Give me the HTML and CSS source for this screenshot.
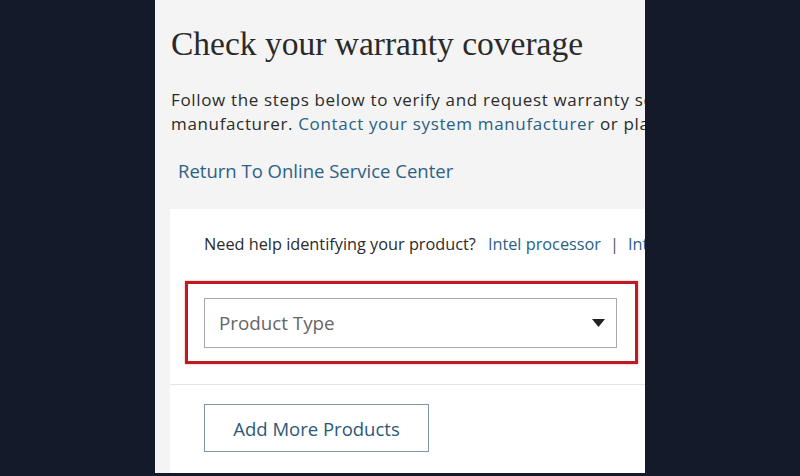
FILE: index.html
```html
<!DOCTYPE html>
<html>
<head>
<meta charset="utf-8">
<link rel="stylesheet" href="styles.css">
</head>
<body>
<div class="panel">
  <div class="inner">
    <h1 class="title">Check your warranty coverage</h1>
    <p class="intro">Follow the steps below to verify and request warranty service for Intel products purchased from an authorized distributor or system<br>manufacturer. <a class="link" href="#">Contact your system manufacturer</a> or place your request for other products.</p>
    <a class="return" href="#">Return To Online Service Center</a>
    <div class="card">
      <div class="card-top">
        <div class="help">
          <span class="help-q">Need help identifying your product?</span>
          <a class="link" href="#">Intel processor</a>
          <span class="sep">|</span>
          <a class="link" href="#">Intel® SSD</a>
        </div>
        <div class="highlight">
          <div class="select">
            <span class="select-label">Product Type</span>
            <svg class="caret" width="13" height="8" viewBox="0 0 13 8"><polygon points="0,0 13,0 6.5,8" fill="#222"/></svg>
          </div>
        </div>
      </div>
      <div class="card-bottom">
        <button class="add-btn">Add More Products</button>
      </div>
    </div>
  </div>
</div>
</body>
</html>
```

FILE: styles.css
```css
html, body {
  margin: 0;
  padding: 0;
}
body {
  background: #141a29;
  height: 476px;
  overflow: hidden;
}
.panel {
  width: 490px;
  height: 473px;
  margin: 0 auto;
  background: #f4f4f4;
  overflow: hidden;
}
.inner {
  width: 760px;
  padding: 24px 0 0 16px;
  font-family: "Open Sans", "Liberation Sans", sans-serif;
  color: #2b2b2b;
}
.title {
  margin: 0;
  font-family: "Liberation Serif", "Times New Roman", serif;
  font-weight: normal;
  font-size: 33.5px;
  line-height: 40px;
  color: #2a2a2a;
  white-space: nowrap;
}
.intro {
  margin: 24px 0 0;
  font-size: 17px;
  letter-spacing: 0.65px;
  line-height: 24px;
  white-space: nowrap;
}
.link {
  color: #2a5f85;
  text-decoration: none;
}
.return {
  display: block;
  margin: 22px 0 0 7px;
  font-size: 18.5px;
  line-height: 26px;
  color: #2d6185;
  text-decoration: none;
}
.card {
  margin: 25px 0 0 -1px;
  background: #ffffff;
}
.card-top {
  padding: 25px 0 20px 15px;
  border-bottom: 1px solid #e4e4e4;
}
.help {
  display: flex;
  align-items: center;
  gap: 9px;
  padding-left: 19px;
  font-size: 16.3px;
  line-height: 20px;
  white-space: nowrap;
}
.help-q {
  margin-right: 3px;
}
.sep {
  color: #555555;
}
.highlight {
  margin-top: 27px;
  width: 453px;
  border: 3px solid #c0191f;
  box-shadow: 0 0 2px rgba(220, 60, 60, 0.5);
  padding: 14px 18px 13px 16px;
  box-sizing: border-box;
}
.select {
  height: 50px;
  border: 1px solid #a9a9a9;
  box-sizing: border-box;
  display: flex;
  align-items: center;
  justify-content: space-between;
  padding: 0 11px 0 14px;
  background: #fff;
}
.select-label {
  font-size: 18.8px;
  color: #666;
}
.caret {
  display: block;
}
.card-bottom {
  padding: 19px 0 30px 34px;
}
.add-btn {
  width: 225px;
  height: 48px;
  background: #fff;
  border: 1px solid #7f95a5;
  font-family: "Open Sans", "Liberation Sans", sans-serif;
  font-size: 18.5px;
  color: #2d5878;
  padding: 0;
}
```
